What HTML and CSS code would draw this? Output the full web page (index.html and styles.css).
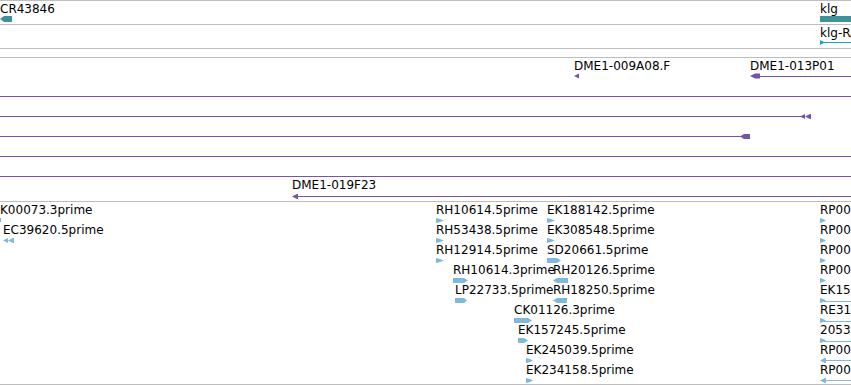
FILE: index.html
```html
<!DOCTYPE html>
<html lang="en">
<head>
    <meta charset="UTF-8">
    <title>Track view</title>
    <link rel="stylesheet" href="styles.css">
</head>
<body>

    <div class="browser">

        <!-- genes -->
        <div class="track track-genes">
            <span class="label" style="left:0;top:1px">CR43846</span>
            <span class="label" style="left:820px;top:1px">klg</span>
            <svg class="glyphs" width="851" height="23">
                <polygon class="teal" points="0,18 4,15 12,15 12,21 4,21"/>
                <rect class="teal" x="820" y="15" width="31" height="6"/>
            </svg>
        </div>

        <!-- transcripts -->
        <div class="track track-transcripts">
            <span class="label" style="left:820px;top:1px">klg-RA</span>
            <svg class="glyphs" width="851" height="23">
                <line class="cyan-line" x1="820" y1="17.5" x2="851" y2="17.5"/>
                <polygon class="cyan" points="820,15 825,17.5 820,20"/>
            </svg>
        </div>

        <div class="track track-empty"></div>

        <!-- cDNA clones -->
        <div class="track track-clones">
            <span class="label" style="left:574px;top:1px">DME1-009A08.F</span>
            <span class="label" style="left:750px;top:1px">DME1-013P01</span>
            <span class="label" style="left:292px;top:120px">DME1-019F23</span>
            <svg class="glyphs" width="851" height="143">
                <polygon class="purple" points="574,18 579,15.5 579,20.5"/>

                <line class="purple-line" x1="758" y1="18.5" x2="851" y2="18.5"/>
                <polygon class="purple" points="750,18 755,15.5 760,15.5 760,20.5 755,20.5"/>

                <line class="purple-line" x1="0" y1="38.5" x2="851" y2="38.5"/>

                <line class="purple-line" x1="0" y1="58.5" x2="801" y2="58.5"/>
                <polygon class="purple" points="800,58.5 805,56 805,61"/>
                <polygon class="purple" points="805,58.5 810,56 811,56 811,61 810,61"/>

                <line class="purple-line" x1="0" y1="78.5" x2="742" y2="78.5"/>
                <polygon class="purple" points="740,78.5 744,76 750,76 750,81 744,81"/>

                <line class="purple-line" x1="0" y1="98.5" x2="851" y2="98.5"/>
                <line class="purple-line" x1="0" y1="118.5" x2="851" y2="118.5"/>

                <line class="purple-line" x1="294" y1="138.5" x2="851" y2="138.5"/>
                <polygon class="purple" points="292,138.5 297,136 298,136 298,141 297,141"/>
            </svg>
        </div>

        <!-- ESTs -->
        <div class="track track-ests">
            <span class="label" style="left:0;top:1px">K00073.3prime</span>
            <span class="label" style="left:436px;top:1px">RH10614.5prime</span>
            <span class="label" style="left:547px;top:1px">EK188142.5prime</span>
            <span class="label" style="left:820px;top:1px">RP00217.5prime</span>

            <span class="label" style="left:3px;top:21px">EC39620.5prime</span>
            <span class="label" style="left:436px;top:21px">RH53438.5prime</span>
            <span class="label" style="left:547px;top:21px">EK308548.5prime</span>
            <span class="label" style="left:820px;top:21px">RP00381.5prime</span>

            <span class="label" style="left:436px;top:41px">RH12914.5prime</span>
            <span class="label" style="left:547px;top:41px">SD20661.5prime</span>
            <span class="label" style="left:820px;top:41px">RP00504.5prime</span>

            <span class="label" style="left:453px;top:61px">RH10614.3prime</span>
            <span class="label" style="left:553px;top:61px">RH20126.5prime</span>
            <span class="label" style="left:820px;top:61px">RP00632.5prime</span>

            <span class="label" style="left:455px;top:81px">LP22733.5prime</span>
            <span class="label" style="left:553px;top:81px">RH18250.5prime</span>
            <span class="label" style="left:820px;top:81px">EK157713.5prime</span>

            <span class="label" style="left:514px;top:101px">CK01126.3prime</span>
            <span class="label" style="left:820px;top:101px">RE31852.5prime</span>

            <span class="label" style="left:518px;top:121px">EK157245.5prime</span>
            <span class="label" style="left:820px;top:121px">2053.5prime</span>

            <span class="label" style="left:526px;top:141px">EK245039.5prime</span>
            <span class="label" style="left:820px;top:141px">RP00719.3prime</span>

            <span class="label" style="left:526px;top:161px">EK234158.5prime</span>
            <span class="label" style="left:820px;top:161px">RP00733.3prime</span>

            <svg class="glyphs" width="851" height="182">
                <rect class="blue" x="0" y="16" width="1" height="4"/>
                <polygon class="blue" points="436,16 440,17 444,18.5 440,20 436,21"/>
                <polygon class="blue" points="547,16 551,17 555,18.5 551,20 547,21"/>
                <polygon class="blue" points="820,16 823,17 826,18.5 823,20 820,21"/>

                <polygon class="blue" points="3,38.5 8,36 8,41"/>
                <polygon class="blue" points="8,38.5 13,36 14,36 14,41 13,41"/>
                <polygon class="blue" points="436,36 440,37 444,38.5 440,40 436,41"/>
                <polygon class="blue" points="547,36 551,37 555,38.5 551,40 547,41"/>
                <polygon class="blue" points="820,36 823,37 826,38.5 823,40 820,41"/>

                <polygon class="blue" points="436,56 440,57 444,58.5 440,60 436,61"/>
                <polygon class="blue" points="547,56 557,56 561,58.5 557,61 547,61"/>
                <polygon class="blue" points="820,56 823,57 826,58.5 823,60 820,61"/>

                <polygon class="blue" points="453,76 464,76 468,78.5 464,81 453,81"/>
                <polygon class="blue" points="553,78.5 557,76 568,76 568,81 557,81"/>
                <polygon class="blue" points="820,76 823,77 826,78.5 823,80 820,81"/>

                <polygon class="blue" points="455,96 464,96 467,98.5 464,101 455,101"/>
                <polygon class="blue" points="553,98.5 557,96 567,96 567,101 557,101"/>
                <line class="blue-line" x1="824" y1="99.5" x2="851" y2="99.5"/>
                <polygon class="blue" points="820,96 823,97 826,98.5 823,100 820,101"/>

                <polygon class="blue" points="514,116 528,116 532,118.5 528,121 514,121"/>
                <line class="blue-line" x1="824" y1="119.5" x2="851" y2="119.5"/>
                <polygon class="blue" points="820,116 823,117 826,118.5 823,120 820,121"/>

                <polygon class="blue" points="518,136 524,136 528,138.5 524,141 518,141"/>
                <line class="blue-line" x1="824" y1="139.5" x2="851" y2="139.5"/>
                <polygon class="blue" points="820,136 823,137 826,138.5 823,140 820,141"/>

                <polygon class="blue" points="526,156 530,157 533,158.5 530,160 526,161"/>
                <line class="blue-line" x1="824" y1="158.5" x2="851" y2="158.5"/>
                <polygon class="blue" points="820,158.5 825,156 826,156 826,161 825,161"/>

                <polygon class="blue" points="526,176 530,177 533,178.5 530,180 526,181"/>
                <line class="blue-line" x1="824" y1="178.5" x2="851" y2="178.5"/>
                <polygon class="blue" points="820,178.5 825,176 826,176 826,181 825,181"/>
            </svg>
        </div>

    </div>

</body>
</html>
```

FILE: styles.css
```css
/* page */
body {
    margin: 0;
    padding: 0;
    background: #fff;
    font-family: "DejaVu Sans", sans-serif;
    overflow: hidden;
}

.browser {
    width: 851px;
    border-top: 1px solid #bdbdbd;
}

/* tracks */
.track {
    position: relative;
    overflow: hidden;
    border-bottom: 1px solid #bdbdbd;
}

.track-genes,
.track-transcripts {
    height: 23px;
}

.track-empty {
    height: 8px;
}

.track-clones {
    height: 143px;
}

.track-ests {
    height: 182px;
}

.label {
    position: absolute;
    font-size: 12px;
    line-height: 14px;
    color: #000;
    white-space: nowrap;
}

.glyphs {
    position: absolute;
    left: 0;
    top: 0;
}

/* feature colours */
.teal {
    fill: #3d9297;
}

.cyan {
    fill: #1aa3c9;
}

.cyan-line {
    stroke: #1aa3c9;
    stroke-width: 1;
    shape-rendering: crispEdges;
}

.purple {
    fill: #7552ab;
}

.purple-line {
    stroke: #7552ab;
    stroke-width: 1;
    shape-rendering: crispEdges;
}

.blue {
    fill: #7fb8dd;
}

.blue-line {
    stroke: #7fb8dd;
    stroke-width: 1;
    shape-rendering: crispEdges;
}
```
